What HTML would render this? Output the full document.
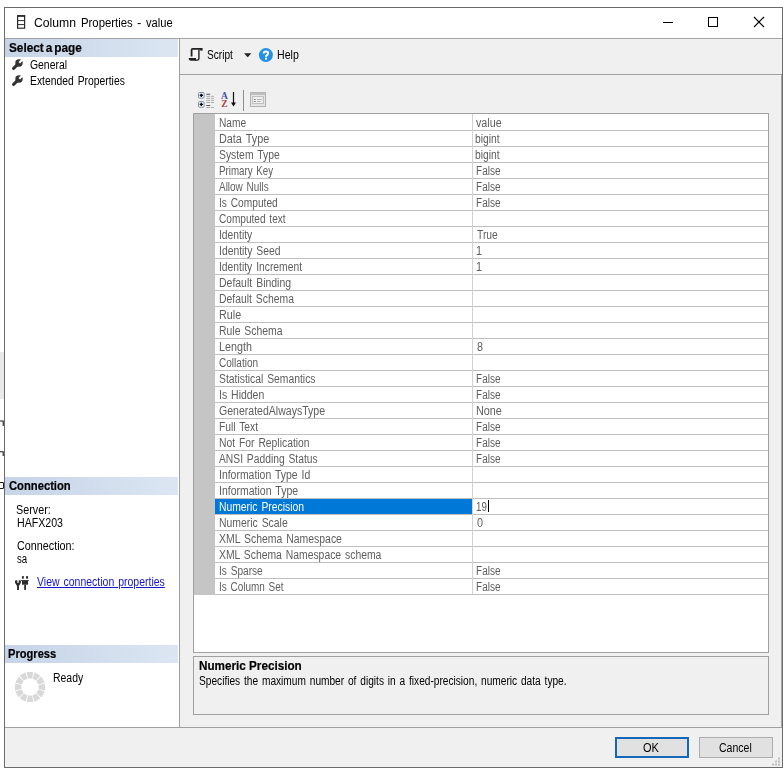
<!DOCTYPE html>
<html>
<head>
<meta charset="utf-8">
<title>Column Properties - value</title>
<style>
html,body{margin:0;padding:0;}
body{width:783px;height:772px;background:#fff;position:relative;overflow:hidden;font-family:"Liberation Sans",sans-serif;}
div,svg{position:absolute;box-sizing:border-box;}
.t{white-space:nowrap;font-size:12px;line-height:14px;color:#000;transform-origin:0 0;}
#win{left:4px;top:7px;width:779px;height:761px;border:1px solid #6b6b6b;background:#f0f0f0;}
#title{left:5px;top:8px;width:777px;height:30px;background:#fff;}
#titleline{left:5px;top:38px;width:777px;height:1px;background:#a3a3a3;}
#lpanel{left:5px;top:39px;width:174px;height:688px;background:#fff;}
#lborder{left:179px;top:39px;width:1px;height:688px;background:#a0a0a0;}
.hdr{left:5px;width:173px;height:18px;background:linear-gradient(90deg,#c6d4e7 0%,#dce6f3 100%);}
#tbline{left:180px;top:74px;width:602px;height:1px;background:#a0a0a0;}
#sepline{left:5px;top:727px;width:777px;height:1px;background:#a0a0a0;}
#grid{left:193px;top:113px;width:576px;height:540px;background:#fff;border:1px solid #a0a0a0;}
#gmargin{left:194px;top:114px;width:21px;height:481px;background:#c5c5c5;}
.hl{left:215px;width:553px;height:1px;background:#c0c0c0;}
#vdiv{left:472px;top:114px;width:1px;height:480px;background:#d2d2d2;}
#sel{left:215px;top:499px;width:257px;height:15px;background:#0078d7;}
#caret{left:488px;top:500px;width:1px;height:12px;background:#000;}
#desc{left:193px;top:656px;width:576px;height:59px;border:1px solid #a0a0a0;background:#f0f0f0;}
#ok{left:615px;top:737px;width:74px;height:21px;background:#e1e1e1;border:2px solid #1767b8;}
#cancel{left:699px;top:737px;width:74px;height:21px;background:#e1e1e1;border:1px solid #adadad;}
#bgstrip{left:0;top:352px;width:4px;height:47px;background:#e9e9e9;}
</style>
</head>
<body>
<div id="bgstrip"></div>
<svg style="left:0;top:415px" width="4" height="80" viewBox="0 0 4 80">
<path d="M0 6 H3.2 V11 M0 36.8 H3.2 V41 M0 67.5 H2.6 Q3.6 67.5 3.6 69 V72 Q3.6 73.5 2.6 73.5 H0" fill="none" stroke="#1a1a1a" stroke-width="1.1"/>
</svg>
<div id="win"></div>
<div id="title"></div>
<div id="titleline"></div>
<div id="lpanel"></div>
<div id="lborder"></div>
<div class="hdr" style="top:39px"></div>
<div class="hdr" style="top:477px"></div>
<div class="hdr" style="top:645px"></div>
<div id="tbline"></div>
<div id="sepline"></div>

<!-- title icon -->
<svg style="left:15.6px;top:14px" width="11" height="16" viewBox="0 0 11 16">
<rect x="1.6" y="1.8" width="7" height="12.4" fill="none" stroke="#2b2b2b" stroke-width="1.2"/>
<line x1="1.6" y1="6.6" x2="8.6" y2="6.6" stroke="#2b2b2b" stroke-width="1"/>
<line x1="1.6" y1="10.6" x2="8.6" y2="10.6" stroke="#2b2b2b" stroke-width="1"/>
<line x1="1" y1="2" x2="9.2" y2="2" stroke="#2b2b2b" stroke-width="1.6"/>
</svg>

<!-- window buttons -->
<svg style="left:655px;top:10px" width="120" height="26" viewBox="0 0 120 26">
<line x1="8" y1="12.5" x2="18" y2="12.5" stroke="#000" stroke-width="1"/>
<rect x="53.5" y="7.5" width="9" height="9" fill="none" stroke="#000" stroke-width="1"/>
<path d="M99 7 L109 17 M109 7 L99 17" stroke="#000" stroke-width="1.1" fill="none"/>
</svg>

<!-- wrench icons -->
<svg style="left:12px;top:59px" width="11" height="11" viewBox="0 0 11 11">
<path d="M1.6 9.4 L5.6 5.4" stroke="#333" stroke-width="3" stroke-linecap="round" fill="none"/><circle cx="7" cy="4" r="3.7" fill="#333"/><path d="M6.5 3.1 L10.2 -0.8 L11.8 0.8 L8.0 4.6 Z" fill="#fff"/>
</svg>
<svg style="left:12px;top:75px" width="11" height="11" viewBox="0 0 11 11">
<path d="M1.6 9.4 L5.6 5.4" stroke="#333" stroke-width="3" stroke-linecap="round" fill="none"/><circle cx="7" cy="4" r="3.7" fill="#333"/><path d="M6.5 3.1 L10.2 -0.8 L11.8 0.8 L8.0 4.6 Z" fill="#fff"/>
</svg>

<!-- connection icon -->
<svg style="left:14px;top:575px" width="16" height="16" viewBox="0 0 16 16">
<path d="M1 6.3 Q1 5.3 2 5.3 L3.3 5.3 L3.3 7.2 Q3.3 7.9 4 7.9 Q4.7 7.9 4.7 7.2 L4.7 5.3 L5.9 5.3 Q6.9 5.3 6.9 6.3 L6.9 7.8 L4.95 10.9 L4.95 14.9 L3.05 14.9 L3.05 10.9 L1 7.8 Z" fill="#2e2e2e"/>
<rect x="7.97" y="1.1" width="1.85" height="2.6" fill="#2e2e2e"/>
<rect x="12.1" y="1.1" width="1.95" height="2.6" fill="#2e2e2e"/>
<rect x="6.9" y="5" width="7.9" height="0.9" fill="#2e2e2e"/>
<rect x="8" y="5.8" width="6.06" height="3.9" fill="#2e2e2e"/>
<rect x="10.2" y="9.7" width="1.8" height="5.2" fill="#2e2e2e"/>
</svg>

<!-- spinner -->
<svg style="left:14px;top:671px" width="32" height="32" viewBox="0 0 32 32">
<g fill="#d9d9d9" transform="translate(16 16)">
<g id="seg"><path d="M-3.4 -15 L3.4 -15 L2 -8.6 L-2 -8.6 Z"/></g>
<use href="#seg" transform="rotate(30)"/><use href="#seg" transform="rotate(60)"/><use href="#seg" transform="rotate(90)"/>
<use href="#seg" transform="rotate(120)"/><use href="#seg" transform="rotate(150)"/><use href="#seg" transform="rotate(180)"/>
<use href="#seg" transform="rotate(210)"/><use href="#seg" transform="rotate(240)"/><use href="#seg" transform="rotate(270)"/>
<use href="#seg" transform="rotate(300)"/><use href="#seg" transform="rotate(330)"/>
</g>
</svg>

<!-- toolbar: script icon, arrow, help -->
<svg style="left:186.8px;top:46px" width="18" height="18" viewBox="0 0 18 18">
<path d="M5.4 3.6 H12 V13 H5.4 Z" fill="#f6f6f6"/>
<path d="M4.58 10.6 V4 Q4.58 2.9 5.7 2.9 H15" fill="none" stroke="#222" stroke-width="1.8"/>
<rect x="13.2" y="2.02" width="2.4" height="2.6" fill="#222"/>
<path d="M11.9 3.6 V12.6 Q11.9 14.1 10.4 14.1 H8" fill="none" stroke="#222" stroke-width="1.4"/>
<path d="M1.7 12.04 H9 V14.7 H4 Q1.7 14.7 1.7 12.04 Z" fill="#222"/>
</svg>
<svg style="left:244px;top:53px" width="8" height="5" viewBox="0 0 8 5"><path d="M0 0.3 L7.4 0.3 L3.7 4.2 Z" fill="#222"/></svg>
<svg style="left:258px;top:46.8px" width="16" height="16" viewBox="0 0 16 16">
<circle cx="7.9" cy="8.1" r="7" fill="#2490e2"/>
<path d="M5.7 6.6 Q5.7 4.6 7.9 4.6 Q10.2 4.6 10.2 6.3 Q10.2 7.3 9 8.1 Q8 8.8 8 9.7" fill="none" stroke="#fff" stroke-width="2"/>
<rect x="7" y="10.6" width="2" height="2" fill="#fff"/>
</svg>

<!-- grid toolbar icons -->
<svg style="left:197px;top:91px" width="19" height="18" viewBox="0 0 19 18">
<rect x="1.5" y="1.5" width="5.6" height="5.6" rx="1" fill="#f4f7fc" stroke="#7d8dab" stroke-width="1"/>
<path d="M2.7 4.3 H5.9 M4.3 2.7 V5.9" stroke="#000" stroke-width="1.4"/>
<rect x="1.5" y="10.6" width="5.6" height="5.6" rx="1" fill="#f4f7fc" stroke="#7d8dab" stroke-width="1"/>
<path d="M2.7 13.4 H5.9 M4.3 11.8 V15" stroke="#000" stroke-width="1.4"/>
<path d="M9.3 3.2 H13.2 M9.3 14.5 H13.2" stroke="#555" stroke-width="1.1"/>
<path d="M9.3 5.3 H13.2 M14.2 5.3 H16.9 M9.3 7.3 H13.2 M14.2 7.3 H16.9 M9.3 9.4 H13.2 M14.2 9.4 H16.9 M9.3 11.5 H13.2 M14.2 11.5 H16.9 M9.3 16.5 H13.2 M14.2 16.5 H16.9" stroke="#a9a9a9" stroke-width="1"/>
</svg>
<svg style="left:220px;top:91px" width="18" height="18" viewBox="0 0 18 18">
<text x="1" y="7.8" font-family="Liberation Serif" font-weight="700" font-size="9.5" fill="#4650a0">A</text>
<text x="1.2" y="16" font-family="Liberation Serif" font-weight="700" font-size="9.5" fill="#a8483c">Z</text>
<path d="M13.5 1 V14" stroke="#111" stroke-width="1.2"/>
<path d="M11 11.4 L16 11.4 L13.5 15.6 Z" fill="#111"/>
</svg>
<div style="left:243px;top:90px;width:1px;height:21px;background:#8e8e8e"></div>
<svg style="left:250px;top:92px" width="16" height="15" viewBox="0 0 16 15">
<rect x="0.5" y="0.5" width="15" height="14" fill="#e6e6e6" stroke="#b2b2b2" stroke-width="1"/>
<rect x="0.5" y="0.5" width="15" height="2.4" fill="#bdbdbd"/>
<rect x="2.6" y="4.6" width="10.8" height="7" fill="#f0f0f0" stroke="#bdbdbd" stroke-width="1"/>
<path d="M4 7.5 H5.6 M4 9.5 H5.6" stroke="#7e7e7e" stroke-width="1.2"/>
<path d="M7 7.5 H11.8 M7 9.5 H10.6" stroke="#b5b5b5" stroke-width="1"/>
</svg>

<!-- property grid -->
<div id="grid"></div>
<div id="gmargin"></div>
<div class='hl' style='top:130px'></div>
<div class='hl' style='top:146px'></div>
<div class='hl' style='top:162px'></div>
<div class='hl' style='top:178px'></div>
<div class='hl' style='top:194px'></div>
<div class='hl' style='top:210px'></div>
<div class='hl' style='top:226px'></div>
<div class='hl' style='top:242px'></div>
<div class='hl' style='top:258px'></div>
<div class='hl' style='top:274px'></div>
<div class='hl' style='top:290px'></div>
<div class='hl' style='top:306px'></div>
<div class='hl' style='top:322px'></div>
<div class='hl' style='top:338px'></div>
<div class='hl' style='top:354px'></div>
<div class='hl' style='top:370px'></div>
<div class='hl' style='top:386px'></div>
<div class='hl' style='top:402px'></div>
<div class='hl' style='top:418px'></div>
<div class='hl' style='top:434px'></div>
<div class='hl' style='top:450px'></div>
<div class='hl' style='top:466px'></div>
<div class='hl' style='top:482px'></div>
<div class='hl' style='top:498px'></div>
<div class='hl' style='top:514px'></div>
<div class='hl' style='top:530px'></div>
<div class='hl' style='top:546px'></div>
<div class='hl' style='top:562px'></div>
<div class='hl' style='top:578px'></div>
<div class='hl' style='top:594px'></div>
<div id="vdiv"></div>
<div id="sel"></div>
<div id="caret"></div>
<div id="desc"></div>

<!-- buttons -->
<div id="ok"></div>
<div id="cancel"></div>
<svg style="left:771px;top:756px" width="11" height="11" viewBox="0 0 11 11">
<g fill="#bcbcbc">
<rect x="7" y="1.5" width="2" height="2"/>
<rect x="4" y="4.5" width="2" height="2"/><rect x="7" y="4.5" width="2" height="2"/>
<rect x="1" y="7.5" width="2" height="2"/><rect x="4" y="7.5" width="2" height="2"/><rect x="7" y="7.5" width="2" height="2"/>
</g>
</svg>
<div style="left:781px;top:75px;width:1px;height:652px;background:#a6a6a6"></div>

<div id="txt" style="left:0;top:0;width:783px;height:772px;will-change:transform">
<div class='t' style='left:34.10px;top:16px;transform:scaleX(1.0171);'>Column</div>
<div class='t' style='left:80.65px;top:16px;transform:scaleX(0.9463);'>Properties</div>
<div class='t' style='left:137.00px;top:16px;transform:scaleX(1.0750);'>-</div>
<div class='t' style='left:145.70px;top:16px;transform:scaleX(0.9286);'>value</div>
<div class='t' style='left:8.72px;top:41px;font-weight:700;-webkit-text-stroke:0.2px #000;transform:scaleX(0.9836);word-spacing:-1.3px;'>Select a page</div>
<div class='t' style='left:29.60px;top:58px;transform:scaleX(0.8667);'>General</div>
<div class='t' style='left:29.54px;top:74px;transform:scaleX(0.8624);word-spacing:1.2px;'>Extended Properties</div>
<div class='t' style='left:8.90px;top:479px;font-weight:700;-webkit-text-stroke:0.2px #000;transform:scaleX(0.9348);'>Connection</div>
<div class='t' style='left:16.20px;top:503px;transform:scaleX(0.8973);'>Server:</div>
<div class='t' style='left:16.52px;top:516px;transform:scaleX(0.8843);'>HAFX203</div>
<div class='t' style='left:16.70px;top:539px;transform:scaleX(0.8984);'>Connection:</div>
<div class='t' style='left:16.90px;top:552px;transform:scaleX(0.8000);'>sa</div>
<div class='t' style='left:37.00px;top:575px;color:#1414cc;transform:scaleX(0.8740);word-spacing:1.2px;text-decoration:underline;'>View connection properties</div>
<div class='t' style='left:7.87px;top:647px;font-weight:700;-webkit-text-stroke:0.2px #000;transform:scaleX(0.9275);'>Progress</div>
<div class='t' style='left:52.63px;top:671px;transform:scaleX(0.8706);'>Ready</div>
<div class='t' style='left:206.96px;top:48px;transform:scaleX(0.8433);'>Script</div>
<div class='t' style='left:277.42px;top:48px;transform:scaleX(0.8826);'>Help</div>
<div class='t' style='left:198.53px;top:659px;font-weight:700;-webkit-text-stroke:0.2px #000;transform:scaleX(0.9750);'>Numeric Precision</div>
<div class='t' style='left:198.65px;top:674px;transform:scaleX(0.8455);word-spacing:1.2px;'>Specifies the maximum number of digits in a fixed-precision, numeric data type.</div>
<div class='t' style='left:643.40px;top:741px;transform:scaleX(0.9176);'>OK</div>
<div class='t' style='left:718.60px;top:741px;transform:scaleX(0.8784);'>Cancel</div>
<div class='t' style='left:218.55px;top:116px;color:#5e5e5e;transform:scaleX(0.8484);'>Name</div>
<div class='t' style='left:476.00px;top:116px;color:#5e5e5e;transform:scaleX(0.8929);'>value</div>
<div class='t' style='left:218.50px;top:132px;color:#5e5e5e;transform:scaleX(0.9019);word-spacing:1.2px;'>Data Type</div>
<div class='t' style='left:475.14px;top:132px;color:#5e5e5e;transform:scaleX(0.8571);'>bigint</div>
<div class='t' style='left:218.54px;top:148px;color:#5e5e5e;transform:scaleX(0.8623);word-spacing:1.2px;'>System Type</div>
<div class='t' style='left:475.14px;top:148px;color:#5e5e5e;transform:scaleX(0.8571);'>bigint</div>
<div class='t' style='left:218.59px;top:164px;color:#5e5e5e;transform:scaleX(0.8121);word-spacing:1.2px;'>Primary Key</div>
<div class='t' style='left:476.16px;top:164px;color:#5e5e5e;transform:scaleX(0.8357);'>False</div>
<div class='t' style='left:219.40px;top:180px;color:#5e5e5e;transform:scaleX(0.8300);word-spacing:1.2px;'>Allow Nulls</div>
<div class='t' style='left:476.16px;top:180px;color:#5e5e5e;transform:scaleX(0.8357);'>False</div>
<div class='t' style='left:218.55px;top:196px;color:#5e5e5e;transform:scaleX(0.8485);word-spacing:1.2px;'>Is Computed</div>
<div class='t' style='left:476.16px;top:196px;color:#5e5e5e;transform:scaleX(0.8357);'>False</div>
<div class='t' style='left:219.40px;top:212px;color:#5e5e5e;transform:scaleX(0.8405);word-spacing:1.2px;'>Computed text</div>
<div class='t' style='left:218.54px;top:228px;color:#5e5e5e;transform:scaleX(0.8579);'>Identity</div>
<div class='t' style='left:477.00px;top:228px;color:#5e5e5e;transform:scaleX(0.8583);'>True</div>
<div class='t' style='left:218.54px;top:244px;color:#5e5e5e;transform:scaleX(0.8643);word-spacing:1.2px;'>Identity Seed</div>
<div class='t' style='left:476.10px;top:244px;color:#5e5e5e;transform:scaleX(0.9000);'>1</div>
<div class='t' style='left:218.54px;top:260px;color:#5e5e5e;transform:scaleX(0.8594);word-spacing:1.2px;'>Identity Increment</div>
<div class='t' style='left:476.10px;top:260px;color:#5e5e5e;transform:scaleX(0.9000);'>1</div>
<div class='t' style='left:218.53px;top:276px;color:#5e5e5e;transform:scaleX(0.8728);word-spacing:1.2px;'>Default Binding</div>
<div class='t' style='left:218.53px;top:292px;color:#5e5e5e;transform:scaleX(0.8663);word-spacing:1.2px;'>Default Schema</div>
<div class='t' style='left:218.50px;top:308px;color:#5e5e5e;transform:scaleX(0.8957);'>Rule</div>
<div class='t' style='left:218.53px;top:324px;color:#5e5e5e;transform:scaleX(0.8681);word-spacing:1.2px;'>Rule Schema</div>
<div class='t' style='left:218.50px;top:340px;color:#5e5e5e;transform:scaleX(0.8971);'>Length</div>
<div class='t' style='left:477.00px;top:340px;color:#5e5e5e;transform:scaleX(0.9000);'>8</div>
<div class='t' style='left:219.40px;top:356px;color:#5e5e5e;transform:scaleX(0.8370);'>Collation</div>
<div class='t' style='left:218.54px;top:372px;color:#5e5e5e;transform:scaleX(0.8622);word-spacing:1.2px;'>Statistical Semantics</div>
<div class='t' style='left:476.16px;top:372px;color:#5e5e5e;transform:scaleX(0.8357);'>False</div>
<div class='t' style='left:218.53px;top:388px;color:#5e5e5e;transform:scaleX(0.8720);word-spacing:1.2px;'>Is Hidden</div>
<div class='t' style='left:476.16px;top:388px;color:#5e5e5e;transform:scaleX(0.8357);'>False</div>
<div class='t' style='left:219.40px;top:404px;color:#5e5e5e;transform:scaleX(0.8783);'>GeneratedAlwaysType</div>
<div class='t' style='left:476.10px;top:404px;color:#5e5e5e;transform:scaleX(0.9000);'>None</div>
<div class='t' style='left:218.54px;top:420px;color:#5e5e5e;transform:scaleX(0.8556);word-spacing:1.2px;'>Full Text</div>
<div class='t' style='left:476.16px;top:420px;color:#5e5e5e;transform:scaleX(0.8357);'>False</div>
<div class='t' style='left:218.54px;top:436px;color:#5e5e5e;transform:scaleX(0.8615);word-spacing:1.2px;'>Not For Replication</div>
<div class='t' style='left:476.16px;top:436px;color:#5e5e5e;transform:scaleX(0.8357);'>False</div>
<div class='t' style='left:219.40px;top:452px;color:#5e5e5e;transform:scaleX(0.8565);word-spacing:1.2px;'>ANSI Padding Status</div>
<div class='t' style='left:476.16px;top:452px;color:#5e5e5e;transform:scaleX(0.8357);'>False</div>
<div class='t' style='left:218.53px;top:468px;color:#5e5e5e;transform:scaleX(0.8699);word-spacing:1.2px;'>Information Type Id</div>
<div class='t' style='left:218.52px;top:484px;color:#5e5e5e;transform:scaleX(0.8753);word-spacing:1.2px;'>Information Type</div>
<div class='t' style='left:218.54px;top:500px;color:#fff;transform:scaleX(0.8629);word-spacing:1.2px;'>Numeric Precision</div>
<div class='t' style='left:476.18px;top:500px;color:#5e5e5e;transform:scaleX(0.8167);'>19</div>
<div class='t' style='left:218.53px;top:516px;color:#5e5e5e;transform:scaleX(0.8667);word-spacing:1.2px;'>Numeric Scale</div>
<div class='t' style='left:477.00px;top:516px;color:#5e5e5e;transform:scaleX(0.9000);'>0</div>
<div class='t' style='left:219.40px;top:532px;color:#5e5e5e;transform:scaleX(0.8695);word-spacing:1.2px;'>XML Schema Namespace</div>
<div class='t' style='left:219.40px;top:548px;color:#5e5e5e;transform:scaleX(0.8638);word-spacing:1.2px;'>XML Schema Namespace schema</div>
<div class='t' style='left:218.56px;top:564px;color:#5e5e5e;transform:scaleX(0.8412);word-spacing:1.2px;'>Is Sparse</div>
<div class='t' style='left:476.16px;top:564px;color:#5e5e5e;transform:scaleX(0.8357);'>False</div>
<div class='t' style='left:218.57px;top:580px;color:#5e5e5e;transform:scaleX(0.8286);word-spacing:1.2px;'>Is Column Set</div>
<div class='t' style='left:476.16px;top:580px;color:#5e5e5e;transform:scaleX(0.8357);'>False</div>
</div>
</body>
</html>
